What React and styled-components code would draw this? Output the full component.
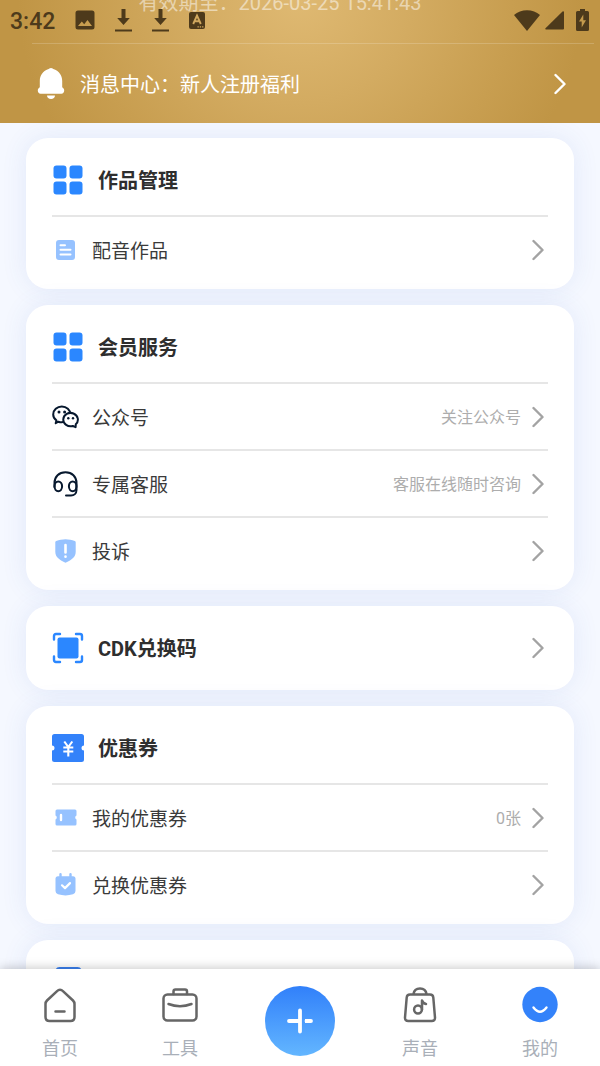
import React from 'react';
import styled, { createGlobalStyle } from 'styled-components';

const GlobalStyle = createGlobalStyle`
  body {
    margin: 0; padding: 0;
    font-family: Roboto, 'Noto Sans CJK SC', sans-serif;
    background: #f5f8ff;
    color: #333;
  }
  * { box-sizing: border-box; }
  svg { display: block; }
`;

// --- Layout ---
const Page = styled.div`
  height: 100vh; display: flex; flex-direction: column;
`;

const Scroller = styled.main`
  flex: 1; min-height: 0; overflow: hidden;
`;

const Cards = styled.div`
  display: flex; flex-direction: column; gap: 16px;
  padding: 15px 26px;
`;

// --- Header ---
const Header = styled.header`
  position: relative; height: 123px; overflow: hidden;
  display: flex; flex-direction: column; justify-content: flex-end;
  background: radial-gradient(ellipse 47% 210% at 50% 0%, #dfb972 0%, #d3ab61 40%, #c89e50 75%, #c09545 100%);
  color: #fff;
`;

const StatusBar = styled.div`
  position: absolute; top: 0; left: 0; right: 0; height: 40px;
  display: flex; align-items: center; justify-content: space-between;
  padding: 0 11px 0 10px; color: #4d3a1b;
`;

const StatusGroup = styled.div`
  display: flex; align-items: center; gap: ${props => props.$gap}px;
`;

const Clock = styled.time`
  padding-top: 4px; font-size: 23px; line-height: 28px; font-weight: 500;
`;

const Expiry = styled.p`
  flex: none; margin: 0 40px 26px 0; text-align: center;
  font-size: 20px; line-height: 28px;
  color: rgba(255, 255, 255, 0.5);
`;

const Message = styled.a`
  flex: none; height: 80px; margin: 0 6px 0 32px; padding: 0 24px 0 5px;
  display: flex; align-items: center; gap: 15px;
  border-top: 1px solid rgba(255, 255, 255, 0.18);
  color: #fff; text-decoration: none;
`;

const MessageText = styled.span`
  flex: 1; padding-top: 2px; font-size: 20px; line-height: 30px;
`;

// --- Cards ---
const Card = styled.section`
  background: #fff; border-radius: 22px; padding: 6px 26px 7px;
  box-shadow: 0 0 26px rgba(60, 100, 200, 0.1);
`;

const CardHead = styled.div`
  height: 71px; display: flex; align-items: center; gap: 14px;
`;

const HeadLink = styled(CardHead).attrs({ as: 'a' })`
  text-decoration: none;
`;

const HeadIcon = styled.span`
  width: 32px; flex: none; display: flex; justify-content: center;
`;

const CardTitle = styled.h2`
  flex: 1; margin: 0; padding-top: 3px;
  font-size: 20px; line-height: 30px; font-weight: 700; color: #2e2e2e;
`;

const Row = styled.a`
  height: 67px; display: flex; align-items: center;
  border-top: 2px solid #e6e6e6;
  color: #3a3a3a; text-decoration: none;
`;

const RowIcon = styled.span`
  width: 27px; flex: none; display: flex; justify-content: center;
`;

const RowLabel = styled.span`
  flex: 1; padding: 5px 0 0 13px; font-size: 19px; line-height: 28px;
`;

const RowNote = styled.span`
  padding-top: 3px; margin-right: 11px; font-size: 16px; line-height: 24px; color: #adadad;
`;

// --- Bottom navigation ---
const TabBar = styled.nav`
  position: relative; flex: none; height: 97px; display: flex; background: #fff;
  box-shadow: 0 -1px 10px rgba(0, 0, 0, 0.22);
`;

const Tab = styled.a`
  flex: 1; display: flex; flex-direction: column; align-items: center;
  gap: 11px; padding-top: 16px;
  font-size: 18px; line-height: 26px; color: #a9afb8; text-decoration: none;
`;

const TabMiddle = styled.div`
  flex: 1; display: flex; justify-content: center; padding-top: 17px;
`;

const AddButton = styled.button`
  width: 70px; height: 70px; padding: 0; border: none; border-radius: 50%;
  display: flex; align-items: center; justify-content: center;
  background: linear-gradient(180deg, #3180fa, #63b6ff);
  cursor: pointer;
`;

// --- Icons ---
const Chevron = ({ color = '#a3a3a3' }) => (
  <svg width="16" height="22" viewBox="0 0 16 22" fill="none" stroke={color} strokeWidth="2.4" strokeLinecap="round" strokeLinejoin="round">
    <path d="M1.500 2 10.500 11 1.500 20" />
  </svg>
);

const BellIcon = () => (
  <svg width="28" height="32" viewBox="0 0 28 32" fill="#fff">
    <path d="M14 0c1.400 0 2 .8 3 1.300 5 2 8.200 6 8.200 11.500v6.500c1.400.8 2 1.900 2 3.200 0 1.900-1.100 3.200-2.800 3.200H3.600C1.900 25.700.8 24.400.8 22.500c0-1.300.6-2.400 2-3.200v-6.500C2.800 7.300 6 3.300 11 1.300 12 .8 12.600 0 14 0z" />
    <path d="M10 27.500h8c0 2.200-1.700 3.500-4 3.500s-4-1.300-4-3.500z" />
  </svg>
);

const PictureIcon = () => (
  <svg width="20" height="20" viewBox="0 0 20 20" fill="currentColor">
    <path fillRule="evenodd" d="M3 .5h14A2.500 2.500 0 0 1 19.500 3v14a2.500 2.500 0 0 1-2.500 2.500H3A2.500 2.500 0 0 1 .5 17V3A2.500 2.500 0 0 1 3 .5zm0 15.500h14l-4.500-6-3.300 4.300L6.800 11.500z" />
  </svg>
);

const DownloadIcon = () => (
  <svg width="17" height="23" viewBox="0 0 17 23" fill="currentColor">
    <path d="M6.500 0h4v9h4.300L8.500 16 2.200 9h4.300zM0 20.500h17v2H0z" />
  </svg>
);

const LetterIcon = () => (
  <svg width="16" height="17" viewBox="0 0 16 17">
    <rect width="16" height="17" rx="2" fill="currentColor" />
    <path d="M4.200 12 8 3.500 11.800 12M5.700 9.200h4.600" fill="none" stroke="#d0a85f" strokeWidth="1.900" />
    <path d="M8.500 14.800h1.300M10.800 14.800h1.300M13.100 14.800h1.300" stroke="#d0a85f" strokeWidth="1.200" />
  </svg>
);

const WifiIcon = () => (
  <svg width="26" height="21" viewBox="0 0 26 21" fill="currentColor">
    <path d="M13 21 0 5C3.500 2 8 .3 13 .3S22.500 2 26 5z" />
  </svg>
);

const SignalIcon = () => (
  <svg width="19" height="19" viewBox="0 0 19 19" fill="currentColor">
    <path d="M19 1v16.500a1 1 0 0 1-1 1H1q-1.200-.3-.5-1.300L17.500.5Q18.700-.2 19 1z" />
  </svg>
);

const BatteryIcon = () => (
  <svg width="13" height="22" viewBox="0 0 13 22">
    <path d="M4 0h5v2h2.500A1.500 1.500 0 0 1 13 3.500v17a1.500 1.500 0 0 1-1.500 1.500h-10A1.500 1.500 0 0 1 0 20.500v-17A1.500 1.500 0 0 1 1.500 2H4z" fill="currentColor" />
    <path d="M7.300 5.500 3 12.500h2.700v6L10 11.200H7.300z" fill="#c49a4c" />
  </svg>
);

const GridIcon = () => (
  <svg width="30" height="30" viewBox="0 0 30 30" fill="#2b87ff">
    <rect x="0.500" y="0.500" width="13" height="13" rx="3" />
    <rect x="16.500" y="0.500" width="13" height="13" rx="3" />
    <rect x="0.500" y="16.500" width="13" height="13" rx="3" />
    <rect x="16.500" y="16.500" width="13" height="13" rx="3" />
  </svg>
);

const ScanIcon = () => (
  <svg width="32" height="32" viewBox="0 0 32 32">
    <rect x="5.500" y="5.500" width="21" height="21" rx="2" fill="#2b87ff" />
    <path d="M2 7.500V4q0-2 2-2h4M24 2h4q2 0 2 2v3.500M30 24.500V28q0 2-2 2h-4M8 30H4q-2 0-2-2v-3.500" fill="none" stroke="#2b87ff" strokeWidth="2.400" strokeLinecap="round" />
  </svg>
);

const CouponIcon = () => (
  <svg width="32" height="28" viewBox="0 0 32 28">
    <path d="M2.500 0h27A2.500 2.500 0 0 1 32 2.500v9a2.500 2.500 0 0 0 0 5v9a2.500 2.500 0 0 1-2.500 2.500h-27A2.500 2.500 0 0 1 0 25.500v-9a2.500 2.500 0 0 0 0-5v-9A2.500 2.500 0 0 1 2.500 0z" fill="#3382fa" />
    <path d="M12.300 7.500 16.300 13l4-5.500M11.300 13.500h10M11.300 17.500h10M16.300 13v9.500" fill="none" stroke="#fff" strokeWidth="2.100" />
  </svg>
);

const BlockIcon = () => (
  <svg width="28" height="32" viewBox="0 0 28 32" fill="#3a80f0">
    <rect x="1.500" y="1" width="26" height="30" rx="4" />
  </svg>
);

const DocIcon = () => (
  <svg width="19" height="20" viewBox="0 0 19 20">
    <rect width="19" height="20" rx="3" fill="#96c2ff" />
    <path d="M4.500 5.300h4.500M4.500 9.800h10M4.500 14.500h10" stroke="#fff" strokeWidth="2" strokeLinecap="round" />
  </svg>
);

const WechatIcon = () => (
  <svg width="27" height="24" viewBox="0 0 27 24" fill="#fff" stroke="#07182e" strokeWidth="2" strokeLinecap="round" strokeLinejoin="round">
    <path d="M4.400 15.400C2.300 13.900 1.200 11.800 1.200 9.500c0-4.500 3.900-7.900 8.600-7.900s8.600 3.400 8.600 7.900-3.900 7.800-8.600 7.800c-1.200 0-2.400-.2-3.400-.6l-2.700 1.500z" />
    <path d="M23.800 19.300a7.300 6.700 0 1 0-3 1.700l2.800 1.200z" />
    <g fill="#07182e" stroke="none">
      <circle cx="7" cy="7" r="1.500" /><circle cx="12.600" cy="7" r="1.500" />
      <circle cx="16.300" cy="13.300" r="1.200" /><circle cx="21" cy="13.300" r="1.200" />
    </g>
  </svg>
);

const HeadsetIcon = () => (
  <svg width="25" height="26" viewBox="0 0 25 26" fill="none" stroke="#07182e" strokeWidth="2" strokeLinecap="round">
    <path d="M1.500 16v-4C1.500 5.500 6 1.200 12.500 1.200S23.500 5.500 23.500 12v7c0 3.500-2.500 5.500-5.500 5.500h-5" />
    <ellipse cx="5.300" cy="15.300" rx="3.800" ry="4.900" />
    <ellipse cx="19.700" cy="15.300" rx="3.800" ry="4.900" />
  </svg>
);

const ShieldIcon = () => (
  <svg width="21" height="24" viewBox="0 0 21 24">
    <path d="M10.500 0.300c3 0 6.500.7 9.300 1.700q.9.400.9 1.400v9.600c0 4.800-4.500 8.500-10.200 10.700C4.800 21.500.3 17.800.3 13V3.400Q.3 2.400 1.200 2C4 1 7.500.3 10.500.3z" fill="#96c2ff" />
    <path d="M10.500 6v7.500M10.500 17.500v.2" stroke="#fff" strokeWidth="2.600" strokeLinecap="round" />
  </svg>
);

const TicketIcon = () => (
  <svg width="22" height="17" viewBox="0 0 22 17">
    <path d="M2 0.500h18a1.500 1.500 0 0 1 1.500 1.500v4.500a2.200 2.200 0 0 0 0 4V15a1.500 1.500 0 0 1-1.500 1.500H2A1.500 1.500 0 0 1 .5 15v-4.500a2.200 2.200 0 0 0 0-4V2A1.500 1.500 0 0 1 2 .5z" fill="#96c2ff" />
    <path d="M6 6v5" stroke="#fff" strokeWidth="2.400" strokeLinecap="round" />
  </svg>
);

const CalendarIcon = () => (
  <svg width="21" height="23" viewBox="0 0 21 23">
    <path d="M5.500 1.200v4M15.500 1.200v4" stroke="#96c2ff" strokeWidth="2.400" strokeLinecap="round" />
    <path d="M3 3.200h15q2.500 0 2.500 2.500V18q0 2.500-2.500 3.300-7.500 2.200-15 0Q.5 20.500.5 18V5.700Q.5 3.200 3 3.200z" fill="#96c2ff" />
    <path d="m7 12.300 3 2.800 5-5" fill="none" stroke="#fff" strokeWidth="2.200" strokeLinecap="round" strokeLinejoin="round" />
  </svg>
);

const tabStroke = { fill: 'none', stroke: '#666', strokeWidth: 2.5, strokeLinecap: 'round', strokeLinejoin: 'round' };

const HomeIcon = () => (
  <svg width="40" height="40" viewBox="0 0 40 40" {...tabStroke}>
    <path d="M5.500 19q0-2 1.500-3.500L16.800 6.300q3.200-3 6.400 0L33 15.500q1.500 1.500 1.500 3.500v13q0 4-4 4h-21q-4 0-4-4zM15.500 26.500h9" />
  </svg>
);

const ToolsIcon = () => (
  <svg width="40" height="40" viewBox="0 0 40 40" {...tabStroke}>
    <rect x="3.500" y="9.500" width="33" height="26" rx="4" />
    <path d="M13.500 9V6.500q0-2 2-2h9.500q2 0 2 2V9M8.500 19q11.500 4.500 23 0" />
  </svg>
);

const SoundIcon = () => (
  <svg width="40" height="40" viewBox="0 0 40 40" {...tabStroke}>
    <path d="M10 9.500h20q3 0 3.300 3L35 32.500q.2 3.500-3.300 3.500H8.300Q4.800 36 5 32.500l1.700-20q.3-3 3.300-3zM13.500 9c.5-3.500 3-5.500 6.500-5.500s6 2 6.500 5.500" />
    <circle cx="18" cy="24.500" r="3.900" />
    <path d="M22 24.500V15.500q1 3 4 3.500" />
  </svg>
);

const MineIcon = () => (
  <svg width="40" height="40" viewBox="0 0 40 40">
    <circle cx="20" cy="19.500" r="17.700" fill="#3382fa" />
    <path d="M13.500 22.500q6.500 8.500 13 0" fill="none" stroke="#fff" strokeWidth="2.400" strokeLinecap="round" />
  </svg>
);

const PlusIcon = () => (
  <svg width="28" height="28" viewBox="0 0 28 28" stroke="#fff" strokeWidth="3.800" strokeLinecap="round">
    <path d="M14 3.500v21M3 14h10M20.500 14h4.500" />
    <path d="M19 14h2" strokeLinecap="butt" />
  </svg>
);

// --- Data ---
const SECTIONS = [
  { title: '作品管理', icon: <GridIcon />, rows: [
    { label: '配音作品', icon: <DocIcon /> },
  ] },
  { title: '会员服务', icon: <GridIcon />, rows: [
    { label: '公众号', icon: <WechatIcon />, note: '关注公众号' },
    { label: '专属客服', icon: <HeadsetIcon />, note: '客服在线随时咨询' },
    { label: '投诉', icon: <ShieldIcon /> },
  ] },
  { title: 'CDK兑换码', icon: <ScanIcon />, rows: [] },
  { title: '优惠券', icon: <CouponIcon />, rows: [
    { label: '我的优惠券', icon: <TicketIcon />, note: '0张' },
    { label: '兑换优惠券', icon: <CalendarIcon /> },
  ] },
];

function Section({ title, icon, rows }) {
  // a section without rows is itself the link
  if (rows.length === 0) {
    return (
      <Card>
        <HeadLink href="#">
          <HeadIcon>{icon}</HeadIcon>
          <CardTitle>{title}</CardTitle>
          <Chevron />
        </HeadLink>
      </Card>
    );
  }
  return (
    <Card>
      <CardHead>
        <HeadIcon>{icon}</HeadIcon>
        <CardTitle>{title}</CardTitle>
      </CardHead>
      {rows.map(row => (
        <Row key={row.label} href="#">
          <RowIcon>{row.icon}</RowIcon>
          <RowLabel>{row.label}</RowLabel>
          {row.note && <RowNote>{row.note}</RowNote>}
          <Chevron />
        </Row>
      ))}
    </Card>
  );
}

export default function App() {
  return (
    <>
      <GlobalStyle />
      <Page>
        <Scroller>
          <Header>
            <Expiry>有效期至：2026-03-25 15:41:43</Expiry>
            <Message href="#">
              <BellIcon />
              <MessageText>消息中心：新人注册福利</MessageText>
              <Chevron color="#fff" />
            </Message>
            <StatusBar>
              <StatusGroup $gap={20}>
                <Clock>3:42</Clock>
                <PictureIcon />
                <DownloadIcon />
                <DownloadIcon />
                <LetterIcon />
              </StatusGroup>
              <StatusGroup $gap={12}>
                <StatusGroup $gap={5}>
                  <WifiIcon />
                  <SignalIcon />
                </StatusGroup>
                <BatteryIcon />
              </StatusGroup>
            </StatusBar>
          </Header>

          <Cards>
            {SECTIONS.map(section => <Section key={section.title} {...section} />)}
            <Card>
              <CardHead>
                <HeadIcon><BlockIcon /></HeadIcon>
              </CardHead>
            </Card>
          </Cards>
        </Scroller>

        <TabBar>
          <Tab href="#"><HomeIcon />首页</Tab>
          <Tab href="#"><ToolsIcon />工具</Tab>
          <TabMiddle>
            <AddButton aria-label="新建"><PlusIcon /></AddButton>
          </TabMiddle>
          <Tab href="#"><SoundIcon />声音</Tab>
          <Tab href="#"><MineIcon />我的</Tab>
        </TabBar>
      </Page>
    </>
  );
}
